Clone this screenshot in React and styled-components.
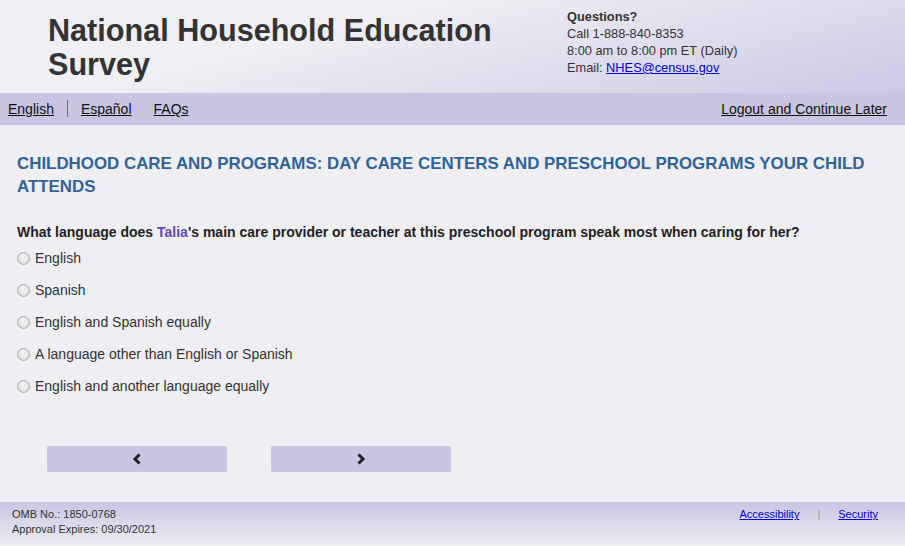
import React from 'react';
import styled, { createGlobalStyle } from 'styled-components';

const GlobalStyle = createGlobalStyle`
    html, body {
        margin: 0;
        padding: 0;
        background: #efeef3;
        font-family: 'Liberation Sans', Arial, sans-serif;
        color: #333;
    }
`;

const Page = styled('div')`
    display: flex;
    flex-direction: column;
    height: 546px;
`;

const Header = styled('header')`
    height: 93px;
    box-sizing: border-box;
    display: flex;
    padding: 13px 0 0 48px;
    background: linear-gradient(166deg, #f0eff4 35%, #cbc9e4 100%);
`;

const Title = styled('h1')`
    margin: 0;
    width: 519px;
    font-size: 30.6px;
    line-height: 34px;
    font-weight: bold;
    color: #333;
`;

const Contact = styled('div')`
    margin-top: -5px;
    font-size: 12.8px;
    line-height: 17px;
    color: #333;

    strong {
        font-weight: bold;
    }

    a {
        color: #0000cc;
    }
`;

const NavBar = styled('nav')`
    height: 32px;
    background: #c7c5e1;
    display: flex;
    align-items: center;
    padding: 0 18px 0 8px;
    font-size: 14px;
`;

const NavLink = styled('a')`
    color: #111;
    text-decoration: underline;
    margin-right: ${({ gap }) => gap || 0}px;
`;

const NavDivider = styled('span')`
    width: 1px;
    height: 17px;
    background: #7a6a5a;
    margin: -2px 13px 0 13px;
`;

const Spacer = styled('div')`
    flex: 1;
`;

const Main = styled('main')`
    flex: 1;
    padding: 27px 17px 0 17px;
`;

const SectionTitle = styled('h2')`
    margin: 0 0 26px;
    font-size: 16.9px;
    line-height: 23px;
    font-weight: bold;
    color: #2f6496;
`;

const Question = styled('p')`
    margin: 0 0 2px;
    font-size: 14px;
    font-weight: bold;
    color: #222;
`;

const Name = styled('span')`
    color: #5b4bb8;
`;

const Options = styled('div')`
    display: flex;
    flex-direction: column;
`;

const Option = styled('label')`
    display: flex;
    align-items: center;
    height: 32px;
    font-size: 14px;
    color: #333;
`;

const Radio = styled('input')`
    appearance: none;
    width: 13px;
    height: 13px;
    margin: 0 5px 0 0;
    border-radius: 50%;
    border: 1px solid #afafaf;
    background: radial-gradient(circle at 50% 40%, #f6f6f6 0%, #d6d6d6 100%);
    box-sizing: border-box;
`;

const ButtonRow = styled('div')`
    display: flex;
    gap: 44px;
    padding: 44px 0 0 30px;
`;

const NavButton = styled('button')`
    width: 180px;
    height: 26px;
    border: none;
    border-radius: 2px;
    background: #c7c5e1;
    color: #222;
    display: flex;
    align-items: center;
    justify-content: center;
    padding: 0;
    cursor: pointer;
`;

const Footer = styled('footer')`
    height: 44px;
    box-sizing: border-box;
    padding: 5px 27px 0 12px;
    display: flex;
    background: linear-gradient(to bottom, #c8c6e2 0%, #eeedf3 100%);
    font-size: 11px;
    line-height: 15px;
    color: #333;
`;

const FooterLinks = styled('div')`
    display: flex;
    align-items: flex-start;

    a {
        color: #0000cc;
    }
`;

const FooterDivider = styled('span')`
    color: #999;
    margin: 0 18px;
`;

function Chevron({ dir }) {
    const d = dir === 'left' ? 'M7.5 1.5 L3 6 L7.5 10.5' : 'M2.5 1.5 L7 6 L2.5 10.5';
    return (
        <svg width="10" height="12" viewBox="0 0 10 12">
            <path d={d} fill="none" stroke="currentColor" strokeWidth="3" strokeLinejoin="miter" />
        </svg>
    );
}

export default function App() {
    const options = [
        'English',
        'Spanish',
        'English and Spanish equally',
        'A language other than English or Spanish',
        'English and another language equally',
    ];

    return (
        <Page>
            <GlobalStyle />
            <Header>
                <Title>National Household Education Survey</Title>
                <Contact>
                    <strong>Questions?</strong>
                    <br />
                    Call 1-888-840-8353
                    <br />
                    8:00 am to 8:00 pm ET (Daily)
                    <br />
                    Email: <a href="#">NHES@census.gov</a>
                </Contact>
            </Header>
            <NavBar>
                <NavLink href="#">English</NavLink>
                <NavDivider />
                <NavLink href="#" gap={22}>Español</NavLink>
                <NavLink href="#">FAQs</NavLink>
                <Spacer />
                <NavLink href="#">Logout and Continue Later</NavLink>
            </NavBar>
            <Main>
                <SectionTitle>
                    CHILDHOOD CARE AND PROGRAMS: DAY CARE CENTERS AND PRESCHOOL PROGRAMS YOUR CHILD ATTENDS
                </SectionTitle>
                <Question>
                    What language does <Name>Talia</Name>'s main care provider or teacher at this preschool
                    program speak most when caring for her?
                </Question>
                <Options>
                    {options.map((opt) => (
                        <Option key={opt}>
                            <Radio type="radio" name="lang" />
                            {opt}
                        </Option>
                    ))}
                </Options>
                <ButtonRow>
                    <NavButton aria-label="Previous">
                        <Chevron dir="left" />
                    </NavButton>
                    <NavButton aria-label="Next">
                        <Chevron dir="right" />
                    </NavButton>
                </ButtonRow>
            </Main>
            <Footer>
                <div>
                    OMB No.: 1850-0768
                    <br />
                    Approval Expires: 09/30/2021
                </div>
                <Spacer />
                <FooterLinks>
                    <a href="#">Accessibility</a>
                    <FooterDivider>|</FooterDivider>
                    <a href="#">Security</a>
                </FooterLinks>
            </Footer>
        </Page>
    );
}
